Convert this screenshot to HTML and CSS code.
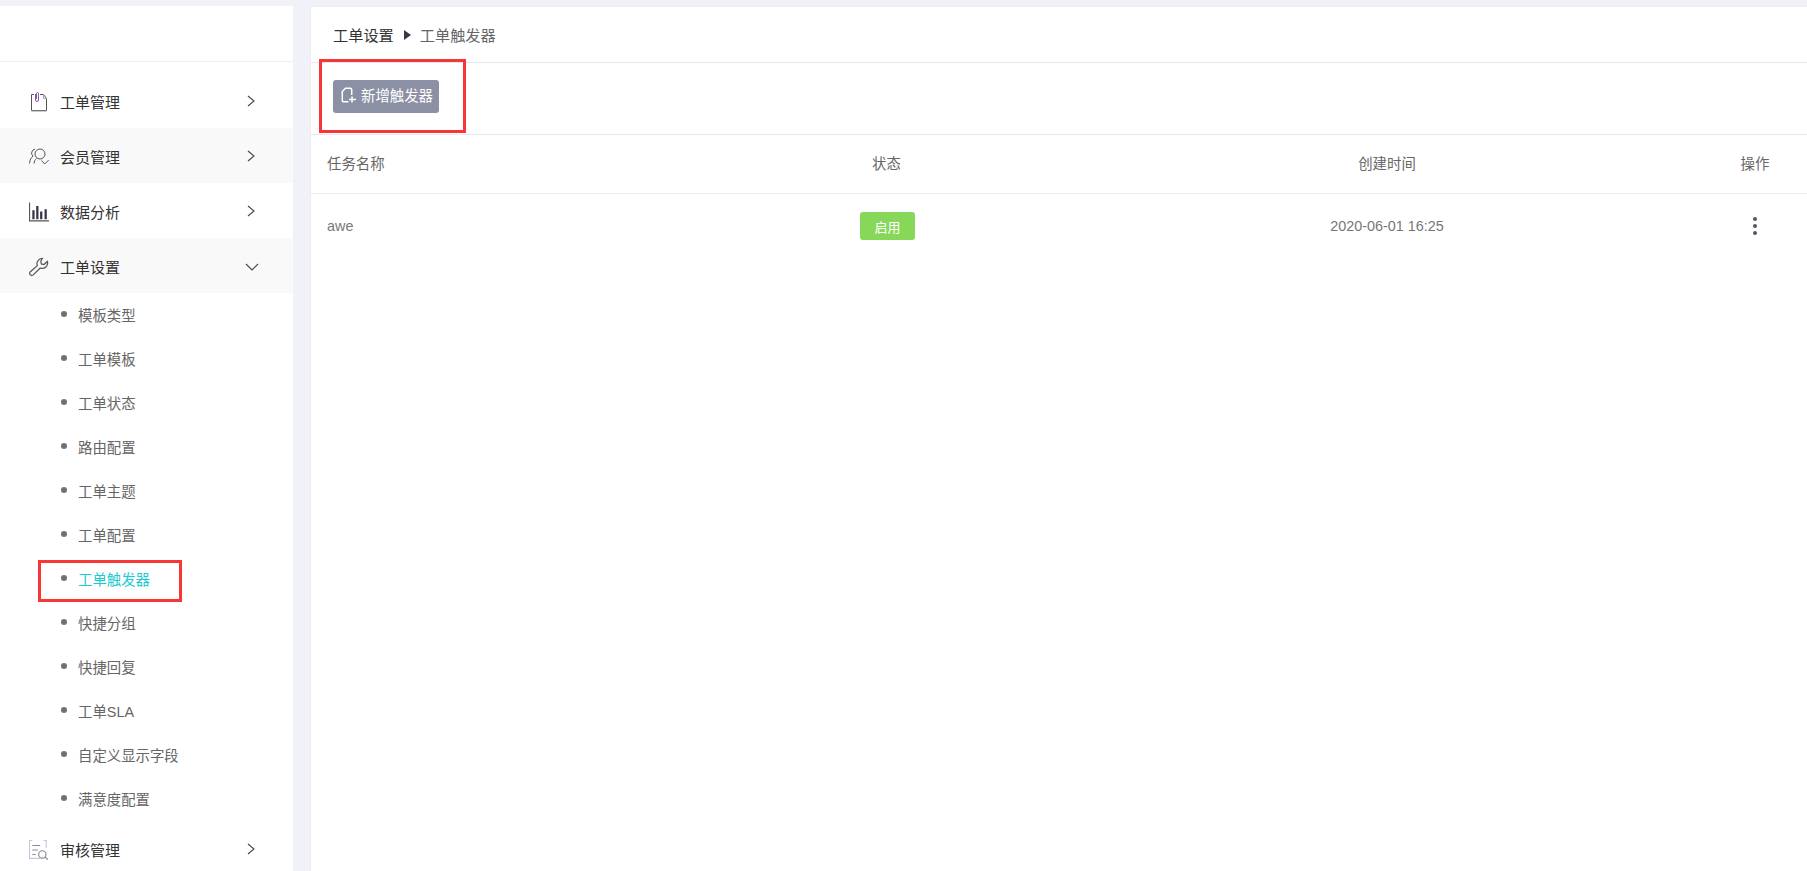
FILE: index.html
```html
<!DOCTYPE html>
<html lang="zh">
<head>
<meta charset="utf-8">
<title>工单触发器</title>
<link rel="stylesheet" href="styles.css">
</head>
<body>
<div class="app">
  <aside class="sidebar">
    <div class="logo-area"></div>
    <nav class="menu">
      <div class="menu-item">
        <svg class="menu-icon" viewBox="0 0 20 20" fill="none" stroke="#555" stroke-width="1"><path d="M5 2.500H2.500v16h15V6.500l-3-4H11"/><path d="M14.500 2.500v4h3" stroke="#aaa"/><path d="M6.500 2v6a1.500 1.500 0 0 0 3 0V1.500a1 1 0 0 0-2 0V7" stroke="#85a"/><path d="M2.500 19.500h15" stroke="#ccc" stroke-width="1.500"/></svg>
        <span class="menu-label">工单管理</span>
        <svg class="chev" viewBox="0 0 8 12" fill="none" stroke="#445" stroke-width="1.100"><path d="M1 1l6 5-6 5"/></svg>
      </div>
      <div class="menu-item shaded">
        <svg class="menu-icon" viewBox="0 0 20 18" fill="none" stroke="#555" stroke-width="1"><circle cx="11" cy="6" r="5"/><path d="M6 1.200a4 4 0 0 0-2 7C2 9.500.7 12 .5 15.500M7.500 10.500C6 11.500 5.300 13.500 5 15.500M12.500 12.500l3.200 3.500 4-4"/></svg>
        <span class="menu-label">会员管理</span>
        <svg class="chev" viewBox="0 0 8 12" fill="none" stroke="#445" stroke-width="1.100"><path d="M1 1l6 5-6 5"/></svg>
      </div>
      <div class="menu-item">
        <svg class="menu-icon" viewBox="0 0 18 17" fill="none"><path d="M.5 0v16.500H18" stroke="#555"/><path d="M4 7v8M7.500 3v12M11 8v7M15 6v9" stroke="#334" stroke-width="2"/></svg>
        <span class="menu-label">数据分析</span>
        <svg class="chev" viewBox="0 0 8 12" fill="none" stroke="#445" stroke-width="1.100"><path d="M1 1l6 5-6 5"/></svg>
      </div>
      <div class="menu-item shaded">
        <svg class="menu-icon" viewBox="0 0 18 17" fill="none" stroke="#555" stroke-width="1.100"><path d="M12 .8a4.800 4.800 0 0 0-4.500 6.500L1 13a2 2 0 0 0 0 2.400c.8.800 2 .9 2.800.2l6.300-6.200a4.800 4.800 0 0 0 6.400-5.900l-3 2.800-2.400-.6-.5-2.300z"/></svg>
        <span class="menu-label">工单设置</span>
        <svg class="chev-down" viewBox="0 0 14 8" fill="none" stroke="#445" stroke-width="1.100"><path d="M1 1l6 6 6-6"/></svg>
      </div>
      <ul class="submenu">
        <li class="sub-item">模板类型</li>
        <li class="sub-item">工单模板</li>
        <li class="sub-item">工单状态</li>
        <li class="sub-item">路由配置</li>
        <li class="sub-item">工单主题</li>
        <li class="sub-item">工单配置</li>
        <li class="sub-item active">工单触发器</li>
        <li class="sub-item">快捷分组</li>
        <li class="sub-item">快捷回复</li>
        <li class="sub-item">工单SLA</li>
        <li class="sub-item">自定义显示字段</li>
        <li class="sub-item">满意度配置</li>
      </ul>
      <div class="menu-item">
        <svg class="menu-icon" viewBox="0 0 18 18" fill="none" stroke="#889" stroke-width="1"><path d="M3 .5H.5v16H10M13 .5h2.500V7" stroke="#bcd"/><path d="M3 5h7M3 9h5M3 13h3"/><circle cx="12" cy="13" r="3.300"/><path d="M14.500 15.500l2.500 2"/></svg>
        <span class="menu-label">审核管理</span>
        <svg class="chev" viewBox="0 0 8 12" fill="none" stroke="#445" stroke-width="1.100"><path d="M1 1l6 5-6 5"/></svg>
      </div>
    </nav>
  </aside>
  <main class="content">
    <div class="breadcrumb">
      <span class="crumb-parent">工单设置</span>
      <span class="crumb-sep"></span>
      <span class="crumb-current">工单触发器</span>
    </div>
    <div class="toolbar">
      <button class="add-btn" type="button">
        <svg class="add-icon" viewBox="0 0 15 16" fill="none" stroke="#fff" stroke-width="1.500"><path d="M7.500 14.800H2.500a1.200 1.200 0 0 1-1.200-1.200V4.500L4.500 1.200h5a1.200 1.200 0 0 1 1.200 1.200V8"/><path d="M11 9.500v6M8 12.500h7" stroke-width="1.600"/></svg>
        新增触发器
      </button>
    </div>
    <div class="table-row table-head">
      <div class="col-name">任务名称</div>
      <div class="col-status">状态</div>
      <div class="col-time">创建时间</div>
      <div class="col-op">操作</div>
    </div>
    <div class="table-row table-body">
      <div class="col-name">awe</div>
      <div class="col-status"><span class="tag">启用</span></div>
      <div class="col-time">2020-06-01 16:25</div>
      <div class="col-op"><span class="dots"><i></i><i></i><i></i></span></div>
    </div>
  </main>
</div>
<div class="mark mark-button"></div>
<div class="mark mark-menu"></div>
</body>
</html>
```
FILE: styles.css
```css
* { box-sizing: border-box; }
html, body { margin: 0; height: 100%; overflow: hidden; }
body {
  background: #f0f2f7;
  font-family: "Liberation Sans", "Noto Sans CJK SC", sans-serif;
  font-size: 14.400px;
  color: #666;
}
.app { display: flex; height: 871px; padding-top: 6px; gap: 17px; }
.sidebar { width: 293px; flex: none; background: #fff; overflow: hidden; }
.logo-area { height: 56px; border-bottom: 1px solid #eeeff2; }
.menu { padding-top: 11px; }
.menu-item {
  height: 55px;
  display: flex;
  align-items: center;
  position: relative;
  padding: 2px 0 0 29px;
  color: #333;
  font-size: 15px;
}
.menu-item.shaded { background: #f9f9fa; }
.menu-icon { width: 20px; height: 20px; flex: none; }
.menu-label { margin-left: 11px; }
.chev { width: 8px; height: 12px; margin: -2px 38px 0 auto; }
.chev-down { width: 14px; height: 8px; margin: 0 34px 0 auto; }
.submenu { list-style: none; margin: 0; padding: 0; }
.sub-item {
  height: 44px;
  display: flex;
  align-items: center;
  padding: 0 0 2px 78px;
  position: relative;
  color: #666;
}
.sub-item::before {
  content: "";
  position: absolute;
  left: 61px;
  top: 18px;
  width: 6px;
  height: 6px;
  border-radius: 50%;
  background: #707070;
}
.sub-item.active { color: #1ccbd0; }
.content { flex: 1; background: #fff; border-top: 1px solid #ebedf0; border-left: 1px solid #ebedf0; }
.breadcrumb {
  height: 56px;
  display: flex;
  align-items: center;
  padding: 0 0 2px 22px;
  font-size: 15.200px;
  border-bottom: 1px solid #e4e9ef;
}
.crumb-parent { color: #333; }
.crumb-sep {
  width: 0;
  height: 0;
  margin: 2px 9px 0 10px;
  border-left: 7px solid #333a45;
  border-top: 5.500px solid transparent;
  border-bottom: 5.500px solid transparent;
}
.crumb-current { color: #666; }
.toolbar {
  height: 72px;
  padding: 17px 0 0 22px;
  border-bottom: 1px solid #e4e9ef;
}
.add-btn {
  width: 106px;
  height: 33px;
  border: 0;
  border-radius: 3px;
  background: #8c90a4;
  color: #fff;
  font: inherit;
  display: flex;
  align-items: center;
  padding: 0 0 5px 8px;
  gap: 5px;
}
.add-icon { width: 15px; height: 16px; flex: none; margin-top: 2px; }
.table-row {
  display: grid;
  grid-template-columns: 400px 356px 640px 1fr;
  align-items: center;
}
.table-head { height: 59px; padding-bottom: 4px; border-bottom: 1px solid #e9ebee; }
.table-body { height: 62px; padding-top: 2px; color: #777; }
.col-name { padding-left: 16px; }
.col-status { padding-left: 161px; }
.table-body .col-status { padding-left: 149px; }
.col-time { text-align: center; }
.col-op { text-align: center; padding-right: 4px; }
.tag {
  display: inline-flex;
  align-items: center;
  justify-content: center;
  width: 55px;
  height: 28px;
  border-radius: 3px;
  background: #87d858;
  color: #fff;
  font-size: 13px;
}
.dots { display: inline-flex; flex-direction: column; gap: 3px; vertical-align: middle; }
.dots i { display: block; width: 4px; height: 4px; border-radius: 50%; background: #556; }
.mark { position: absolute; border: 3px solid #f93636; }
.mark-button { left: 319px; top: 59px; width: 147px; height: 74px; }
.mark-menu { left: 38px; top: 560px; width: 144px; height: 42px; }
```
